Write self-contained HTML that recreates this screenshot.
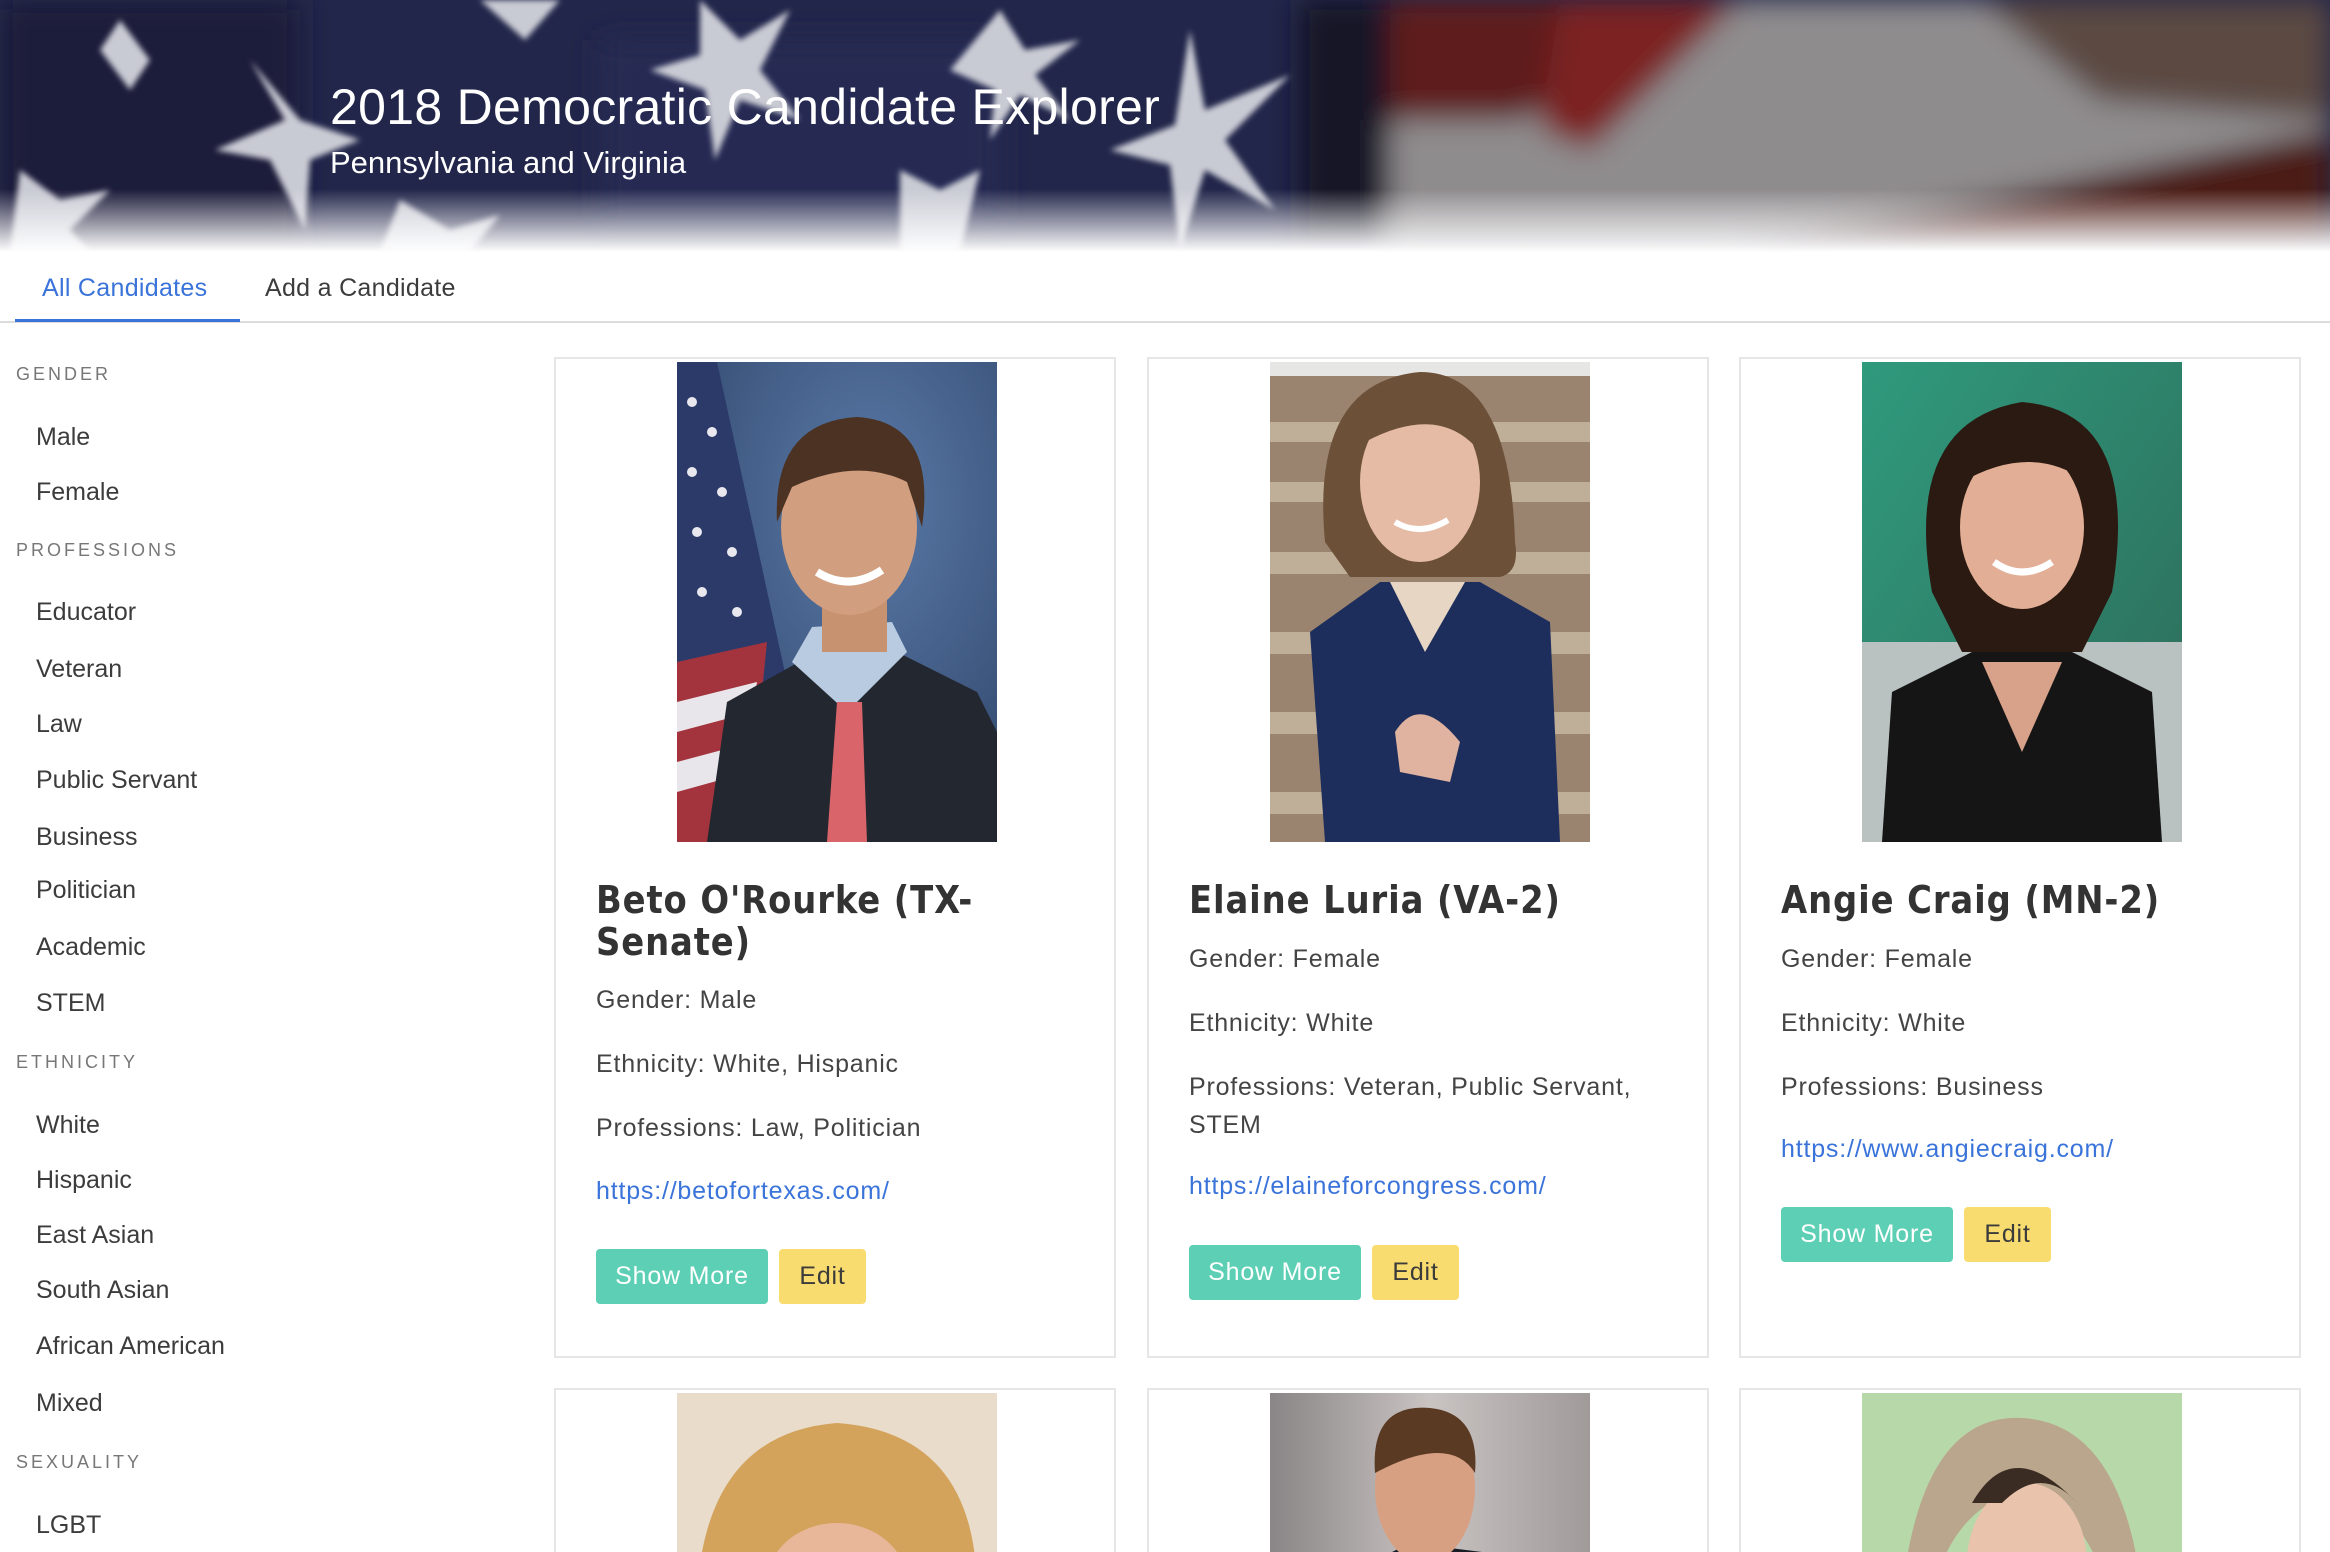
<!DOCTYPE html>
<html><head><meta charset="utf-8"><style>
*{margin:0;padding:0;box-sizing:border-box}
html{width:2330px;height:1552px;overflow:hidden}
body{width:2330px;height:1552px;overflow:hidden;background:#fff;font-family:"Liberation Sans",sans-serif;position:relative;color:#3a3a3a}
.abs{position:absolute;white-space:nowrap}
.hdr{position:absolute;left:0;top:0;width:2330px;height:252px;overflow:hidden}
.side-h{position:absolute;left:16px;font-size:18px;letter-spacing:3px;color:#777}
.side-i{position:absolute;left:36px;font-size:25px;color:#3c3c3c;line-height:30px}
.card{position:absolute;width:562px;border:2px solid #e6e6e6;background:#fff;overflow:hidden}
.photo{position:absolute;left:121px;top:3px;width:320px;height:480px;overflow:hidden}
.t{position:absolute;left:40px;font-size:38px;font-weight:bold;color:#333;letter-spacing:1px;line-height:42px;font-family:"DejaVu Sans","Liberation Sans",sans-serif;transform:scaleX(0.89);transform-origin:left}
.p{position:absolute;left:40px;font-size:25px;color:#444;letter-spacing:0.8px;line-height:38px;white-space:nowrap}
.l{color:#3a73d9}
.btn{position:absolute;height:55px;border-radius:4px;font-size:25px;letter-spacing:0.8px;line-height:55px;text-align:center}
.sm{background:#5dcfb4;color:#fff;width:172px}
.ed{background:#f9dc6f;color:#3b3b3b;width:87px}
</style></head><body>

<div class="hdr">
<svg width="2330" height="252" viewBox="0 0 2330 252">
<defs>
<filter id="b1"><feGaussianBlur stdDeviation="14"/></filter>
<filter id="b2"><feGaussianBlur stdDeviation="3"/></filter>
<linearGradient id="fade" x1="0" y1="0" x2="0" y2="1"><stop offset="0.75" stop-color="#fff" stop-opacity="0"/><stop offset="1" stop-color="#fff" stop-opacity="1"/></linearGradient>
</defs>
<rect width="2330" height="252" fill="#22264a"/>
<g filter="url(#b1)">
<rect x="1370" y="0" width="960" height="252" fill="#8f8c8e"/>
<path d="M1370 0 L1730 0 L1520 120 L1370 120Z" fill="#5e1b1a"/>
<path d="M1560 0 L1740 0 L1590 150 L1540 130Z" fill="#7b2320"/>
<path d="M1980 0 L2330 0 L2330 120 L2100 100Z" fill="#5c4842"/>
<path d="M1720 252 L2330 130 L2330 252Z" fill="#4c1a19"/>
<rect x="1300" y="0" width="90" height="252" fill="#121628"/>
<rect x="0" y="0" width="300" height="252" fill="#1a1d3a"/>
<rect x="600" y="40" width="400" height="180" fill="#262a52"/>
</g>
<g fill="#c9cbd4" filter="url(#b2)">
<path d="M1190 30 L1205 110 L1290 75 L1225 140 L1275 210 L1205 170 L1180 250 L1170 165 L1110 150 L1175 125Z"/>
<path d="M480 0 L560 0 L525 40Z"/>
<path d="M250 60 L285 120 L215 150 L270 160 L305 230 L310 160 L360 140 L300 120Z"/>
<path d="M700 0 L740 40 L790 10 L760 70 L800 120 L740 100 L715 160 L705 90 L650 70 L700 55Z"/>
<path d="M1000 10 L1025 50 L1080 40 L1035 75 L1070 120 L1020 95 L990 140 L995 90 L950 70Z"/>
<path d="M20 170 L60 200 L110 190 L70 230 L90 252 L10 252Z"/>
<path d="M400 200 L450 230 L500 215 L470 252 L380 252Z"/>
<path d="M900 170 L940 190 L980 170 L960 252 L900 252Z"/>
<path d="M120 20 L150 60 L130 90 L100 50Z"/>
</g>
<rect width="2330" height="252" fill="url(#fade)"/>
</svg>
<div class="abs" style="left:330px;top:78px;font-size:50px;color:#fff;letter-spacing:0.3px">2018 Democratic Candidate Explorer</div>
<div class="abs" style="left:330px;top:145px;font-size:31px;color:#fff">Pennsylvania and Virginia</div>
</div>

<div class="abs" style="left:42px;top:274px;font-size:25px;color:#3a73d9;letter-spacing:0.3px">All Candidates</div>
<div class="abs" style="left:265px;top:274px;font-size:25px;color:#3c3c3c;letter-spacing:0.3px">Add a Candidate</div>
<div class="abs" style="left:0;top:321px;width:2330px;height:2px;background:#dcdcdc"></div>
<div class="abs" style="left:15px;top:319px;width:225px;height:3px;background:#3a73d9"></div>

<div class="side-h" style="top:364px">GENDER</div>
<div class="side-i" style="top:422px">Male</div>
<div class="side-i" style="top:477px">Female</div>
<div class="side-h" style="top:540px">PROFESSIONS</div>
<div class="side-i" style="top:597px">Educator</div>
<div class="side-i" style="top:654px">Veteran</div>
<div class="side-i" style="top:709px">Law</div>
<div class="side-i" style="top:765px">Public Servant</div>
<div class="side-i" style="top:822px">Business</div>
<div class="side-i" style="top:875px">Politician</div>
<div class="side-i" style="top:932px">Academic</div>
<div class="side-i" style="top:988px">STEM</div>
<div class="side-h" style="top:1052px">ETHNICITY</div>
<div class="side-i" style="top:1110px">White</div>
<div class="side-i" style="top:1165px">Hispanic</div>
<div class="side-i" style="top:1220px">East Asian</div>
<div class="side-i" style="top:1275px">South Asian</div>
<div class="side-i" style="top:1331px">African American</div>
<div class="side-i" style="top:1388px">Mixed</div>
<div class="side-h" style="top:1452px">SEXUALITY</div>
<div class="side-i" style="top:1510px">LGBT</div>

<!-- Card 1 -->
<div class="card" style="left:554px;top:357px;height:1001px">
<div class="photo"><svg width="320" height="480">
<defs><radialGradient id="g1" cx="0.6" cy="0.3" r="0.8"><stop offset="0" stop-color="#5a7aa8"/><stop offset="1" stop-color="#2e4468"/></radialGradient></defs>
<rect width="320" height="480" fill="url(#g1)"/>
<path d="M0 0 L40 0 L110 320 L80 480 L0 480Z" fill="#2c3a6a"/>
<path d="M0 300 L90 280 L70 480 L0 480Z" fill="#a3343e"/>
<path d="M0 340 L80 320 L75 350 L0 370Z M0 400 L75 380 L72 410 L0 430Z" fill="#e8e6ea"/>
<g fill="#e8e8ee"><circle cx="15" cy="40" r="5"/><circle cx="35" cy="70" r="5"/><circle cx="15" cy="110" r="5"/><circle cx="45" cy="130" r="5"/><circle cx="20" cy="170" r="5"/><circle cx="55" cy="190" r="5"/><circle cx="25" cy="230" r="5"/><circle cx="60" cy="250" r="5"/></g>
<path d="M30 480 L50 340 L140 290 L220 290 L300 330 L320 370 L320 480Z" fill="#23272f"/>
<path d="M115 300 L170 350 L230 290 L215 260 L135 265Z" fill="#b9cbe0"/>
<path d="M160 340 L185 340 L190 480 L150 480Z" fill="#d9656a"/>
<rect x="145" y="230" width="65" height="60" fill="#c7926f"/>
<ellipse cx="172" cy="165" rx="68" ry="88" fill="#d19e7f"/>
<path d="M100 160 Q95 60 180 55 Q260 60 245 165 L230 120 Q180 95 115 125Z" fill="#4b3222"/>
<path d="M140 210 Q172 230 205 208" stroke="#fff" stroke-width="8" fill="none"/>
</svg></div>
<div class="t" style="top:520px">Beto O'Rourke (TX-<br>Senate)</div>
<div class="p" style="top:622px">Gender: Male</div>
<div class="p" style="top:686px">Ethnicity: White, Hispanic</div>
<div class="p" style="top:750px">Professions: Law, Politician</div>
<div class="p l" style="top:813px">https://betofortexas.com/</div>
<div class="btn sm" style="left:40px;top:890px">Show More</div>
<div class="btn ed" style="left:223px;top:890px">Edit</div>
</div>

<!-- Card 2 -->
<div class="card" style="left:1147px;top:357px;height:1001px">
<div class="photo"><svg width="320" height="480">
<rect width="320" height="480" fill="#9a8470"/>
<g fill="#bfae98"><rect y="60" width="320" height="20"/><rect y="120" width="320" height="20"/><rect y="190" width="320" height="22"/><rect y="270" width="320" height="22"/><rect y="350" width="320" height="22"/><rect y="430" width="320" height="22"/></g>
<rect width="320" height="14" fill="#e6e6e4"/>
<path d="M55 480 L40 270 L110 220 L210 220 L280 260 L290 480Z" fill="#1e2e5c"/>
<path d="M120 220 L155 290 L195 220Z" fill="#e8d6c4"/>
<path d="M125 370 Q150 330 190 380 L180 420 L130 410Z" fill="#e0b3a0"/>
<path d="M55 180 Q40 20 150 10 Q240 10 245 180 Q250 210 230 215 L80 215Z" fill="#6c5038"/>
<ellipse cx="150" cy="120" rx="60" ry="80" fill="#e5bba5"/>
<path d="M95 80 Q110 20 170 25 Q200 30 210 90 Q170 40 95 80Z" fill="#6c5038"/>
<path d="M125 160 Q150 175 178 158" stroke="#fff" stroke-width="6" fill="none"/>
</svg></div>
<div class="t" style="top:520px">Elaine Luria (VA-2)</div>
<div class="p" style="top:581px">Gender: Female</div>
<div class="p" style="top:645px">Ethnicity: White</div>
<div class="p" style="top:709px">Professions: Veteran, Public Servant,<br>STEM</div>
<div class="p l" style="top:808px">https://elaineforcongress.com/</div>
<div class="btn sm" style="left:40px;top:886px">Show More</div>
<div class="btn ed" style="left:223px;top:886px">Edit</div>
</div>

<!-- Card 3 -->
<div class="card" style="left:1739px;top:357px;height:1001px">
<div class="photo"><svg width="320" height="480">
<defs><linearGradient id="g3" x1="0" y1="0" x2="1" y2="1"><stop offset="0" stop-color="#2f9a7d"/><stop offset="1" stop-color="#2e6a58"/></linearGradient></defs>
<rect width="320" height="480" fill="url(#g3)"/>
<rect x="0" y="280" width="320" height="200" fill="#b9c2c0"/>
<path d="M20 480 L30 330 L110 290 L210 290 L290 330 L300 480Z" fill="#151515"/>
<path d="M120 300 L160 390 L200 300Z" fill="#d8a28a"/>
<path d="M70 230 Q40 60 160 40 Q280 50 250 230 L220 290 L100 290Z" fill="#2a1a12"/>
<ellipse cx="160" cy="165" rx="62" ry="82" fill="#e2ae95"/>
<path d="M100 120 Q120 60 180 70 Q220 80 225 120 Q170 80 100 120Z" fill="#2a1a12"/>
<path d="M132 200 Q160 220 190 200" stroke="#fff" stroke-width="7" fill="none"/>
</svg></div>
<div class="t" style="top:520px">Angie Craig (MN-2)</div>
<div class="p" style="top:581px">Gender: Female</div>
<div class="p" style="top:645px">Ethnicity: White</div>
<div class="p" style="top:709px">Professions: Business</div>
<div class="p l" style="top:771px">https://www.angiecraig.com/</div>
<div class="btn sm" style="left:40px;top:848px">Show More</div>
<div class="btn ed" style="left:223px;top:848px">Edit</div>
</div>

<!-- Row 2 -->
<div class="card" style="left:554px;top:1388px;height:164px;border-bottom:none">
<div class="photo" style="height:161px"><svg width="320" height="161" viewBox="0 0 320 161">
<rect width="320" height="161" fill="#e9dccb"/>
<path d="M20 200 Q30 40 160 30 Q300 40 300 200 Q280 260 240 200 Q160 120 80 200 Q40 260 20 200Z" fill="#d3a35c"/>
<ellipse cx="160" cy="190" rx="70" ry="60" fill="#e8b79a"/>
</svg></div>
</div>
<div class="card" style="left:1147px;top:1388px;height:164px;border-bottom:none">
<div class="photo" style="height:161px"><svg width="320" height="161" viewBox="0 0 320 161">
<defs><linearGradient id="g5" x1="0" x2="1"><stop offset="0" stop-color="#8a8586"/><stop offset="0.5" stop-color="#c9c4c2"/><stop offset="1" stop-color="#a09a99"/></linearGradient></defs>
<rect width="320" height="161" fill="url(#g5)"/>
<path d="M80 180 L140 150 L220 160 L260 200 L260 480 L80 480Z" fill="#1b1d26"/>
<ellipse cx="155" cy="95" rx="50" ry="75" fill="#d7a083"/>
<path d="M105 80 Q100 10 160 15 Q210 20 205 80 Q180 40 105 80Z" fill="#5b3a24"/>
</svg></div>
</div>
<div class="card" style="left:1739px;top:1388px;height:164px;border-bottom:none">
<div class="photo" style="height:161px"><svg width="320" height="161" viewBox="0 0 320 161">
<rect width="320" height="161" fill="#b7d8a8"/>
<path d="M40 200 Q60 20 160 25 Q260 30 280 200 L250 200 Q200 80 150 100 Q90 120 70 200Z" fill="#b9a68c"/>
<ellipse cx="165" cy="170" rx="60" ry="80" fill="#eac3ad"/>
<path d="M110 110 Q150 40 215 110 Q180 70 140 110Z" fill="#3a2c22"/>
</svg></div>
</div>
</body></html>
